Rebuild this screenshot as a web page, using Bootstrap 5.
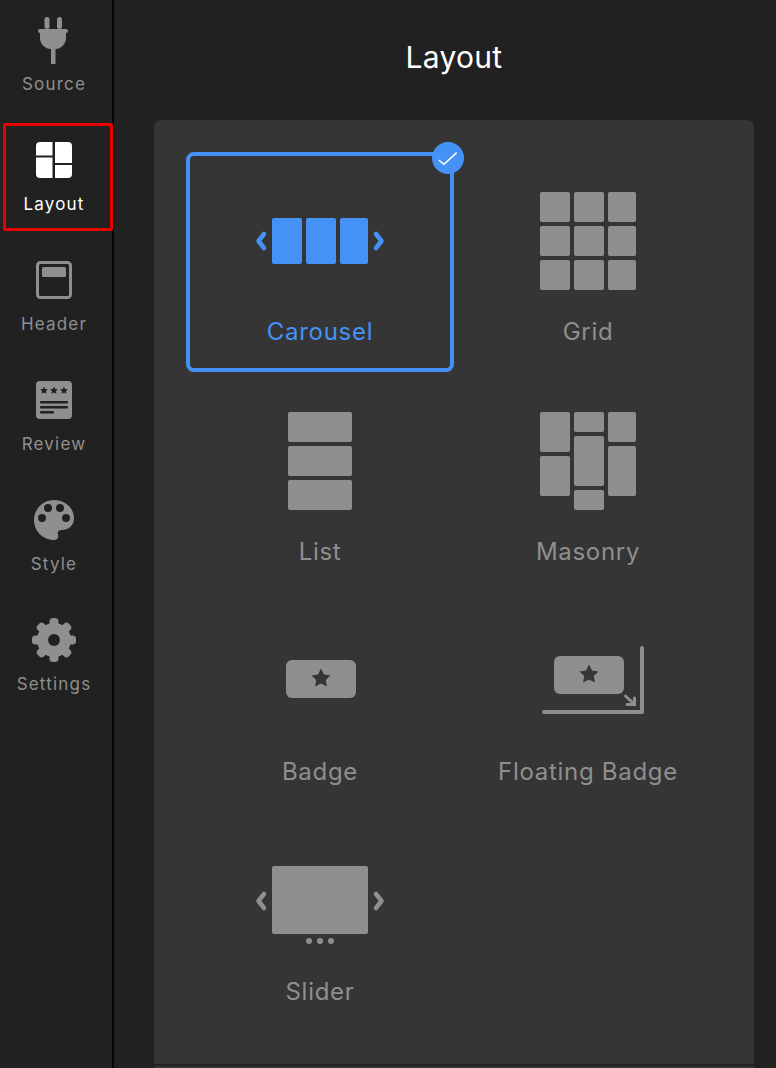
<!DOCTYPE html>
<html lang="en">
<head>
    <meta charset="UTF-8">
    <meta name="viewport" content="width=device-width, initial-scale=1.0">
    <title>Layout</title>
    <link href="https://cdn.jsdelivr.net/npm/bootstrap@5.3.0/dist/css/bootstrap.min.css" rel="stylesheet">
    <style>
        html, body { height: 1068px; overflow: hidden; }
        body { background: #212121; font-family: "Inter", "Liberation Sans", sans-serif; color: #8f8f8f; }
        .side-rail { width: 114px; height: 1068px; background: #212121; border-right: 2px solid #050505; flex: none; }
        .rail-item { height: 120px; padding-top: 18px; }
        .rail-item svg { display: block; width: 112px; height: 44px; fill: #8f8f8f; overflow: visible; }
        .rail-label { font-size: 17px; line-height: 24px; letter-spacing: 1.2px; margin-top: 10px; padding-right: 4px; text-align: center; }
        .rail-item.active { color: #fff; }
        .red-box { position: absolute; left: 3px; top: 3px; width: 110px; height: 108px; border: 3px solid #e60000; border-radius: 2px; }
        .page-title { height: 120px; font-size: 30px; line-height: 114px; letter-spacing: .3px; color: #fff; text-align: center; }
        .main-area { padding: 0 22px 0 40px; }
        .opt-panel { background: #353535; border-radius: 7px 7px 0 0; }
        .opt-list { padding: 32px; border-bottom: 2px solid #232323; }
        .opt-cell { height: 220px; padding-top: 34px; text-align: center; position: relative; border-radius: 8px; }
        .opt-cell svg { display: block; margin: 0 auto; width: 140px; height: 110px; fill: #8f8f8f; }
        .opt-label { font-size: 24px; line-height: 30px; margin-top: 21px; letter-spacing: .7px; }
        .opt-cell.selected { color: #4592f7; border: 4px solid #4592f7; padding-top: 30px; }
        .opt-cell.selected svg { fill: #4592f7; }
        .opt-cell .tick-badge { position: absolute; right: -14px; top: -14px; width: 32px; height: 32px; }
        .chev { fill: none; stroke: #8f8f8f; stroke-width: 4.5; stroke-linecap: round; stroke-linejoin: round; }
        .corner-line { fill: none; stroke: #8f8f8f; stroke-width: 4; stroke-linecap: round; stroke-linejoin: round; }
        .selected .chev { stroke: #4592f7; }
        .panel-foot { height: 10px; }
    </style>
</head>
<body>
    <div class="d-flex">
        <!-- left rail -->
        <nav class="side-rail">
            <div class="rail-item">
                <svg viewBox="0 18 112 44">
                    <rect x="44.5" y="17" width="5" height="12" rx="2.5"/>
                    <rect x="57" y="17" width="5" height="12" rx="2.5"/>
                    <rect x="38" y="29" width="30" height="4" rx="2"/>
                    <path d="M40 32H66V38C66 44 61 49 55.500 49V64H51V49C45 49 40 44 40 38Z"/>
                </svg>
                <div class="rail-label">Source</div>
            </div>
            <div class="rail-item active position-relative">
                <span class="red-box"></span>
                <svg viewBox="0 138 112 44" style="fill:#fff">
                    <path d="M40 142H52.500V155.500H36V146A4 4 0 0 1 40 142Z"/>
                    <path d="M36 157.500H52.500V178H40A4 4 0 0 1 36 174Z"/>
                    <path d="M55 142H68A4 4 0 0 1 72 146V163H55Z"/>
                    <path d="M55 165H72V174A4 4 0 0 1 68 178H55Z"/>
                </svg>
                <div class="rail-label">Layout</div>
            </div>
            <div class="rail-item">
                <svg viewBox="0 258 112 44">
                    <rect x="37.500" y="262.500" width="33" height="35" rx="3" fill="none" stroke="#8f8f8f" stroke-width="3"/>
                    <rect x="42" y="267" width="24" height="10" rx="1.500"/>
                </svg>
                <div class="rail-label">Header</div>
            </div>
            <div class="rail-item">
                <svg viewBox="0 378 112 44">
                    <rect x="36" y="381" width="36" height="38" rx="4"/>
                    <g fill="#212121">
                        <polygon transform="translate(44 390.500)" points="0,-4 1.100,-1.500 3.800,-1.200 1.900,.7 2.400,3.200 0,2 -2.400,3.200 -1.900,.7 -3.800,-1.200 -1.100,-1.500"/>
                        <polygon transform="translate(54 390.500)" points="0,-4 1.100,-1.500 3.800,-1.200 1.900,.7 2.400,3.200 0,2 -2.400,3.200 -1.900,.7 -3.800,-1.200 -1.100,-1.500"/>
                        <polygon transform="translate(64 390.500)" points="0,-4 1.100,-1.500 3.800,-1.200 1.900,.7 2.400,3.200 0,2 -2.400,3.200 -1.900,.7 -3.800,-1.200 -1.100,-1.500"/>
                        <rect x="40" y="401" width="28" height="2.500" rx="1.200"/>
                        <rect x="40" y="406" width="28" height="2.500" rx="1.200"/>
                        <rect x="40" y="411" width="14" height="2.500" rx="1.200"/>
                    </g>
                </svg>
                <div class="rail-label">Review</div>
            </div>
            <div class="rail-item">
                <svg viewBox="0 498 112 44">
                    <path fill-rule="evenodd" d="M54 500C65 500 74 508 74 518C74 526 68 530 62 530C58 530 57 532 58 535C59 538 57 540 54 540C43 540 34 531 34 520C34 509 43 500 54 500ZM48 504A4 4 0 1 0 48 512A4 4 0 1 0 48 504ZM60 504A4 4 0 1 0 60 512A4 4 0 1 0 60 504ZM42 514A4 4 0 1 0 42 522A4 4 0 1 0 42 514ZM66 514A4 4 0 1 0 66 522A4 4 0 1 0 66 514Z"/>
                </svg>
                <div class="rail-label">Style</div>
            </div>
            <div class="rail-item">
                <svg viewBox="0 618 112 44">
                    <g transform="translate(54 640)">
                        <circle r="17"/>
                        <rect x="-4.500" y="-22" width="9" height="44" rx="3.500"/>
                        <rect x="-4.500" y="-22" width="9" height="44" rx="3.500" transform="rotate(45)"/>
                        <rect x="-4.500" y="-22" width="9" height="44" rx="3.500" transform="rotate(90)"/>
                        <rect x="-4.500" y="-22" width="9" height="44" rx="3.500" transform="rotate(135)"/>
                        <circle r="6" fill="#212121"/>
                    </g>
                </svg>
                <div class="rail-label">Settings</div>
            </div>
        </nav>

        <!-- main -->
        <main class="main-area flex-grow-1">
            <div class="page-title">Layout</div>
            <div class="opt-panel">
                <div class="opt-list">
                    <div class="row g-0">
                        <div class="col-6">
                            <div class="opt-cell selected">
                                <svg viewBox="250 186 140 110">
                                    <rect x="272" y="218" width="30" height="46" rx="2"/>
                                    <rect x="306" y="218" width="30" height="46" rx="2"/>
                                    <rect x="340" y="218" width="28" height="46" rx="2"/>
                                    <polyline class="chev" points="264,234 258.500,241 264,248"/>
                                    <polyline class="chev" points="376,234 381.500,241 376,248"/>
                                </svg>
                                <div class="opt-label">Carousel</div>
                                <svg class="tick-badge" viewBox="0 0 32 32">
                                    <circle cx="16" cy="16" r="16"/>
                                    <polyline points="6.700,18 12,22.300 24.700,10.700" fill="none" stroke="#fff" stroke-width="1.600"/>
                                </svg>
                            </div>
                        </div>
                        <div class="col-6">
                            <div class="opt-cell">
                                <svg viewBox="518 186 140 110">
                                    <rect x="540" y="192" width="30" height="30" rx="2"/>
                                    <rect x="574" y="192" width="30" height="30" rx="2"/>
                                    <rect x="608" y="192" width="28" height="30" rx="2"/>
                                    <rect x="540" y="226" width="30" height="30" rx="2"/>
                                    <rect x="574" y="226" width="30" height="30" rx="2"/>
                                    <rect x="608" y="226" width="28" height="30" rx="2"/>
                                    <rect x="540" y="260" width="30" height="30" rx="2"/>
                                    <rect x="574" y="260" width="30" height="30" rx="2"/>
                                    <rect x="608" y="260" width="28" height="30" rx="2"/>
                                </svg>
                                <div class="opt-label">Grid</div>
                            </div>
                        </div>
                        <div class="col-6">
                            <div class="opt-cell">
                                <svg viewBox="250 406 140 110">
                                    <rect x="288" y="412" width="64" height="30" rx="2"/>
                                    <rect x="288" y="446" width="64" height="30" rx="2"/>
                                    <rect x="288" y="480" width="64" height="30" rx="2"/>
                                </svg>
                                <div class="opt-label">List</div>
                            </div>
                        </div>
                        <div class="col-6">
                            <div class="opt-cell">
                                <svg viewBox="518 406 140 110">
                                    <rect x="540" y="412" width="30" height="40" rx="2"/>
                                    <rect x="540" y="456" width="30" height="40" rx="2"/>
                                    <rect x="574" y="412" width="30" height="20" rx="2"/>
                                    <rect x="574" y="436" width="30" height="50" rx="2"/>
                                    <rect x="574" y="490" width="30" height="20" rx="2"/>
                                    <rect x="608" y="412" width="28" height="30" rx="2"/>
                                    <rect x="608" y="446" width="28" height="50" rx="2"/>
                                </svg>
                                <div class="opt-label">Masonry</div>
                            </div>
                        </div>
                        <div class="col-6">
                            <div class="opt-cell">
                                <svg viewBox="250 626 140 110">
                                    <rect x="286" y="660" width="70" height="38" rx="6"/>
                                    <polygon transform="translate(321 678.500)" fill="#353535" points="0,-10 3,-4 9.500,-3.100 4.800,1.600 5.900,8.100 0,5 -5.900,8.100 -4.800,1.600 -9.500,-3.100 -3,-4"/>
                                </svg>
                                <div class="opt-label">Badge</div>
                            </div>
                        </div>
                        <div class="col-6">
                            <div class="opt-cell">
                                <svg viewBox="518 626 140 110">
                                    <rect x="554" y="656" width="70" height="38" rx="6"/>
                                    <polygon transform="translate(589 674.500)" fill="#353535" points="0,-10 3,-4 9.500,-3.100 4.800,1.600 5.900,8.100 0,5 -5.900,8.100 -4.800,1.600 -9.500,-3.100 -3,-4"/>
                                    <polyline class="corner-line" points="642,648 642,712 544,712"/>
                                    <polyline points="625.500,696 634,704" fill="none" stroke="#8f8f8f" stroke-width="3" stroke-linecap="round"/>
                                    <polyline points="634.500,698 634.500,704.500 627,704.500" fill="none" stroke="#8f8f8f" stroke-width="3" stroke-linecap="round"/>
                                </svg>
                                <div class="opt-label">Floating Badge</div>
                            </div>
                        </div>
                        <div class="col-6">
                            <div class="opt-cell">
                                <svg viewBox="250 846 140 110">
                                    <rect x="272" y="866" width="96" height="68" rx="2"/>
                                    <polyline class="chev" points="264,894 258.500,901 264,908"/>
                                    <polyline class="chev" points="376,894 381.500,901 376,908"/>
                                    <circle cx="309" cy="941" r="3"/>
                                    <circle cx="320" cy="941" r="3"/>
                                    <circle cx="331" cy="941" r="3"/>
                                </svg>
                                <div class="opt-label">Slider</div>
                            </div>
                        </div>
                    </div>
                </div>
                <div class="panel-foot"></div>
            </div>
        </main>
    </div>
</body>
</html>
